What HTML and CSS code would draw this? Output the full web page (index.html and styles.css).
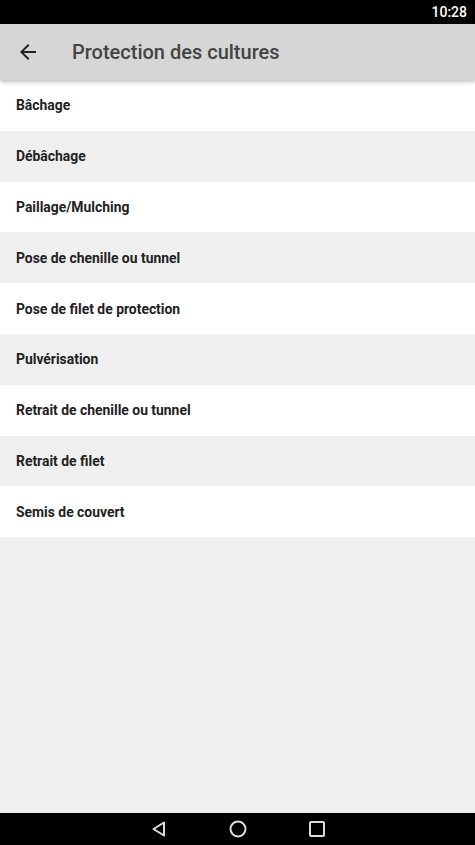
FILE: index.html
```html
<!DOCTYPE html>
<html lang="fr">
  <head>
    <meta charset="UTF-8" />
    <title>Protection des cultures</title>
    <link rel="stylesheet" href="styles.css">
  </head>
  <body>
    <div class="status-bar"><span class="clock">10:28</span></div>

    <div class="app-bar">
      <svg class="back" width="24" height="24" viewBox="0 0 24 24">
        <path d="M20 11H7.83l5.59-5.59L12 4l-8 8 8 8 1.41-1.41L7.83 13H20v-2z" fill="#222" />
      </svg>
      <h1 class="title">Protection des cultures</h1>
    </div>

    <!-- liste des travaux -->
    <ul class="list">
      <li class="row">Bâchage</li>
      <li class="row">Débâchage</li>
      <li class="row">Paillage/Mulching</li>
      <li class="row">Pose de chenille ou tunnel</li>
      <li class="row">Pose de filet de protection</li>
      <li class="row">Pulvérisation</li>
      <li class="row">Retrait de chenille ou tunnel</li>
      <li class="row">Retrait de filet</li>
      <li class="row">Semis de couvert</li>
    </ul>

    <div class="nav-bar">
      <svg width="20" height="20" viewBox="0 0 20 20">
        <path d="M15 3.5 L4.5 10 L15 16.5 Z" fill="none" stroke="#ddd" stroke-width="2" stroke-linejoin="round" />
      </svg>
      <svg width="20" height="20" viewBox="0 0 20 20">
        <circle cx="10" cy="10" r="7.5" fill="none" stroke="#ddd" stroke-width="2" />
      </svg>
      <svg width="20" height="20" viewBox="0 0 20 20">
        <rect x="3" y="3" width="14" height="14" rx="1" fill="none" stroke="#ddd" stroke-width="2" />
      </svg>
    </div>
  </body>
</html>
```

FILE: styles.css
```css
html, body {
  height: 100%;
}
body {
  margin: 0;
  font-family: Roboto, "Noto Sans", sans-serif;
  background-color: #efefef;
  display: flex;
  flex-direction: column;
}
.status-bar {
  height: 24px;
  background-color: #000;
  color: #fff;
  display: flex;
  justify-content: flex-end;
  align-items: center;
  padding-right: 8px;
  font-size: 14px;
  font-weight: 500;
}
.app-bar {
  height: 56px;
  background-color: #d6d6d6;
  display: flex;
  align-items: center;
  box-shadow: 0 2px 4px rgba(0, 0, 0, 0.25);
  position: relative;
  z-index: 1;
}
.back {
  margin-left: 16px;
}
.title {
  margin: 0 0 0 32px;
  font-size: 20px;
  font-weight: 500;
  color: #444;
}
.list {
  list-style: none;
  margin: 0;
  padding: 0;
  flex: 1;
}
.row {
  height: 50.8px;
  display: flex;
  align-items: center;
  padding-left: 16px;
  font-size: 13.9px;
  font-weight: bold;
  color: #222;
  background-color: #fff;
}
.row:nth-child(even) {
  background-color: #efefef;
}
.nav-bar {
  height: 32px;
  background-color: #000;
  display: flex;
  justify-content: center;
  align-items: center;
  gap: 59px;
}
```
